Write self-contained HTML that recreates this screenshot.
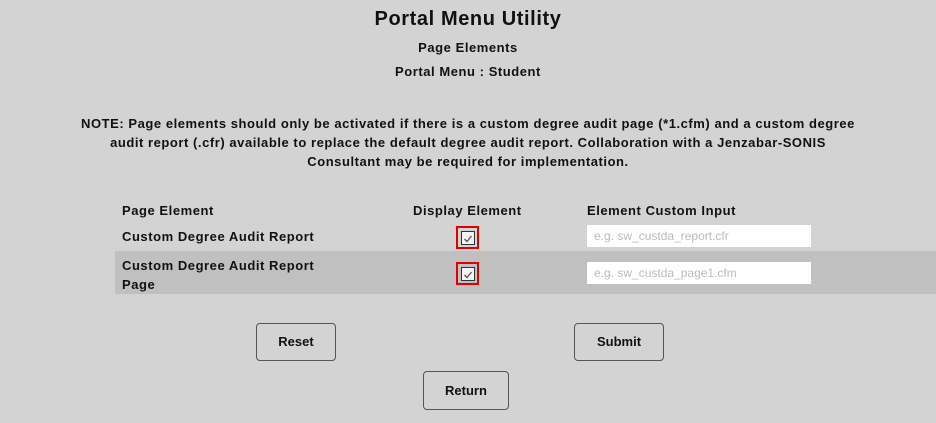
<!DOCTYPE html>
<html><head><style>
body{margin:0;width:936px;height:423px;background:#d3d3d3;font-family:"Liberation Sans",sans-serif;color:#111;position:relative;overflow:hidden}
.a{position:absolute;white-space:nowrap;font-weight:bold;letter-spacing:0.55px}
.c{left:0;width:936px;text-align:center}
.band{position:absolute;left:115px;top:251px;width:821px;height:43px;background:#c0c0c0}
.cb{position:absolute;width:19px;height:19px;border:2px solid #e00000;box-sizing:content-box}
.cb div{position:absolute;left:3px;top:3px;width:12px;height:12px;border:1px solid #333;background:#f4f4f4}
.in{position:absolute;left:587px;width:224px;height:22px;background:#fff;font-size:12px;color:#bbb;line-height:22px;padding-left:7px;box-sizing:border-box}
.btn{position:absolute;border:1px solid #555;border-radius:4px;font-size:13px;font-weight:bold;text-align:center;box-sizing:border-box}
</style></head><body>
<div class="a c" style="top:8px;font-size:20px;letter-spacing:0.6px">Portal Menu Utility</div>
<div class="a c" style="top:40px;font-size:13px">Page Elements</div>
<div class="a c" style="top:64px;font-size:13px">Portal Menu : Student</div>
<div class="a c" style="top:114px;font-size:13px;line-height:19px">NOTE: Page elements should only be activated if there is a custom degree audit page (*1.cfm) and a custom degree<br>audit report (.cfr) available to replace the default degree audit report. Collaboration with a Jenzabar-SONIS<br>Consultant may be required for implementation.</div>
<div class="band"></div>
<div class="a" style="left:122px;top:203px;font-size:13px">Page Element</div>
<div class="a" style="left:413px;top:203px;font-size:13px">Display Element</div>
<div class="a" style="left:587px;top:203px;font-size:13px">Element Custom Input</div>
<div class="a" style="left:122px;top:229px;font-size:13px">Custom Degree Audit Report</div>
<div class="a" style="left:122px;top:256px;font-size:13px;line-height:19px">Custom Degree Audit Report<br>Page</div>
<div class="cb" style="left:456px;top:226px"><div><svg width="12" height="12" viewBox="0 0 12 12"><path d="M2.5 6L5 8.5L9.5 3" stroke="#555" stroke-width="1.3" fill="none"/></svg></div></div>
<div class="cb" style="left:456px;top:262px"><div><svg width="12" height="12" viewBox="0 0 12 12"><path d="M2.5 6L5 8.5L9.5 3" stroke="#555" stroke-width="1.3" fill="none"/></svg></div></div>
<div class="in" style="top:225px">e.g. sw_custda_report.cfr</div>
<div class="in" style="top:262px">e.g. sw_custda_page1.cfm</div>
<div class="btn" style="left:256px;top:323px;width:80px;height:38px;line-height:36px">Reset</div>
<div class="btn" style="left:574px;top:323px;width:90px;height:38px;line-height:36px">Submit</div>
<div class="btn" style="left:423px;top:371px;width:86px;height:39px;line-height:37px">Return</div>
</body></html>
